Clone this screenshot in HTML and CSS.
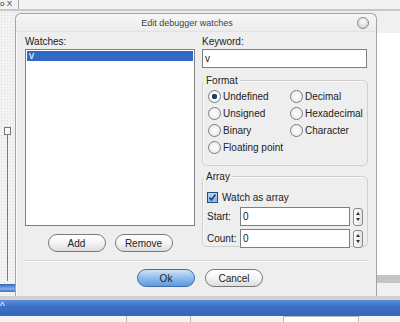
FILE: index.html
```html
<!DOCTYPE html>
<html lang="en">
<head>
    <meta charset="UTF-8">
    <title>Edit debugger watches</title>
    <link rel="stylesheet" href="styles.css">
</head>
<body>
    <div class="topbar">
        <span class="tab">o X</span>
    </div>

    <div class="middle">
        <div class="side-left">
            <div class="tree-box"></div>
            <div class="tree-line"></div>
            <div class="left-sel"></div>
        </div>

        <div class="dialog">
            <div class="title">
                <span>Edit debugger watches</span>
                <span class="close-btn"></span>
            </div>

            <div class="dialog-body">
                <div class="cols">
                    <div class="col-left">
                        <label class="lbl">Watches:</label>
                        <div class="listbox">
                            <div class="item selected">v</div>
                        </div>
                        <div class="btn-row">
                            <button class="btn">Add</button>
                            <button class="btn">Remove</button>
                        </div>
                    </div>

                    <div class="col-right">
                        <label class="lbl">Keyword:</label>
                        <div class="input keyword">v</div>

                        <fieldset class="group format">
                            <legend>Format</legend>
                            <div class="radios">
                                <span class="radio checked">Undefined</span>
                                <span class="radio">Decimal</span>
                                <span class="radio">Unsigned</span>
                                <span class="radio">Hexadecimal</span>
                                <span class="radio">Binary</span>
                                <span class="radio">Character</span>
                                <span class="radio wide">Floating point</span>
                            </div>
                        </fieldset>

                        <fieldset class="group array">
                            <legend>Array</legend>
                            <div class="check-row">
                                <span class="checkbox">
                                    <svg width="9" height="9" viewBox="0 0 9 9"><path d="M1.5 4.5 L3.5 7 L7.5 1.5" fill="none" stroke="#1d3f8a" stroke-width="1.6"/></svg>
                                </span>
                                Watch as array
                            </div>
                            <div class="spin-row">
                                <span class="spin-lbl">Start:</span>
                                <div class="input spin-input">0</div>
                                <span class="spinner"><i class="up"></i><i class="down"></i></span>
                            </div>
                            <div class="spin-row">
                                <span class="spin-lbl">Count:</span>
                                <div class="input spin-input">0</div>
                                <span class="spinner"><i class="up"></i><i class="down"></i></span>
                            </div>
                        </fieldset>
                    </div>
                </div>

                <div class="separator"></div>

                <div class="btn-row main-btns">
                    <button class="btn ok">Ok</button>
                    <button class="btn">Cancel</button>
                </div>
            </div>
        </div>

        <div class="side-right">
            <div class="pane"></div>
        </div>
    </div>

    <div class="bottom">
        <div class="bluebar"><span class="caret">^</span></div>
        <div class="status">
            <span class="cell c1"></span>
            <span class="cell c2"></span>
            <span class="cell c3"></span>
            <span class="cell c4"></span>
        </div>
    </div>
</body>
</html>
```

FILE: styles.css
```css
* {
    box-sizing: border-box;
}

body {
    margin: 0;
    width: 400px;
    height: 322px;
    overflow: hidden;
    background-color: #ececec;
    font-family: 'Liberation Sans', Arial, sans-serif;
    font-size: 10px;
    color: #222;
}

.topbar {
    height: 11px;
    background-color: #f2f2f2;
    border-bottom: 2px solid #c8c8c8;
    display: flex;
    align-items: flex-start;
}

.tab {
    width: 19px;
    height: 9px;
    line-height: 8px;
    font-size: 8px;
    border-right: 1px solid #a8a8a8;
    color: #333;
}

.middle {
    display: flex;
    height: 285px;
}

.side-left {
    width: 15px;
    display: flex;
    flex-direction: column;
    align-items: center;
    background-color: #f3f3f3;
    background-image: radial-gradient(#dcdcdc 0.6px, transparent 0.7px);
    background-size: 3px 3px;
}

.tree-box {
    margin-top: 116px;
    width: 7px;
    height: 8px;
    border: 1px solid #777;
    background-color: #f8f8f8;
}

.tree-line {
    width: 1px;
    height: 146px;
    background-color: #777;
}

.left-sel {
    align-self: stretch;
    height: 8px;
    margin-top: 3px;
    background: linear-gradient(#2d62bd, #86aee6 60%, #3a6fc9);
}

.dialog {
    width: 362px;
    margin-top: 2px;
    border: 1px solid #a4a4a4;
    border-bottom: none;
    border-radius: 6px 6px 0 0;
    background-color: #eeeeee;
    display: flex;
    flex-direction: column;
    box-shadow: inset 1px 0 0 #fafafa;
}

.title {
    height: 18px;
    display: flex;
    align-items: center;
    justify-content: center;
    position: relative;
    padding-right: 18px;
    font-size: 9px;
    color: #444;
    background: linear-gradient(#f6f6f6, #ececec);
    border-bottom: 1px solid #e2e2e2;
    border-radius: 6px 6px 0 0;
}

.close-btn {
    position: absolute;
    right: 7px;
    top: 3px;
    width: 12px;
    height: 12px;
    border-radius: 50%;
    border: 1px solid #8a8a8a;
    background: radial-gradient(circle at 50% 35%, #ffffff, #c9c9c9);
}

.dialog-body {
    padding: 4px 9px 0 9px;
    display: flex;
    flex-direction: column;
}

.cols {
    display: flex;
    gap: 7px;
}

.col-left {
    width: 171px;
    display: flex;
    flex-direction: column;
}

.col-right {
    width: 165px;
    display: flex;
    flex-direction: column;
}

.lbl {
    height: 13px;
    line-height: 12px;
    font-size: 10px;
}

.listbox {
    height: 177px;
    background-color: #fff;
    border: 1px solid #7f7f7f;
    padding: 1px;
}

.item {
    height: 10px;
    line-height: 10px;
    padding-left: 2px;
}

.item.selected {
    background-color: #316ac5;
    color: #fff;
}

.btn-row {
    display: flex;
    justify-content: center;
    gap: 9px;
    margin-top: 8px;
}

.btn {
    width: 58px;
    height: 18px;
    padding: 0;
    border: 1px solid #7a7a7a;
    border-radius: 9px;
    background: linear-gradient(#ffffff, #f4f4f4 50%, #dcdcdc);
    font-family: 'Liberation Sans', Arial, sans-serif;
    font-size: 10px;
    color: #222;
}

.btn.ok {
    border-color: #3e6ea6;
    background: linear-gradient(#cfe3f8, #8fbcec 50%, #5d9be0);
}

.input {
    height: 19px;
    background-color: #fff;
    border: 1px solid #7f7f7f;
    padding-left: 2px;
    line-height: 17px;
    font-size: 10px;
}

.group {
    margin: 0;
    padding: 4px 4px 6px 4px;
    border: 1px solid #cfcfcf;
    border-radius: 5px;
    box-shadow: inset 1px 1px 0 #fafafa;
}

.group legend {
    padding: 0 2px;
    margin-left: -3px;
    font-size: 10px;
}

.format {
    margin-top: 7px;
    height: 91px;
}

.radios {
    display: grid;
    grid-template-columns: 82px 1fr;
    row-gap: 6px;
    padding-top: 1px;
    padding-left: 1px;
}

.radio {
    display: flex;
    align-items: center;
    gap: 2px;
    height: 11px;
    font-size: 10px;
}

.radio::before {
    content: "";
    width: 11px;
    height: 11px;
    border-radius: 50%;
    border: 1px solid #7c7c7c;
    background: radial-gradient(#ffffff, #e4e4e4);
}

.radio.checked::before {
    background: radial-gradient(#1f3e6c 2.5px, #ffffff 3px, #e4e4e4);
}

.radio.wide {
    grid-column: span 2;
}

.array {
    margin-top: 5px;
    height: 76px;
}

.check-row {
    display: flex;
    align-items: center;
    gap: 4px;
    height: 12px;
    margin-top: 5px;
    font-size: 10px;
}

.checkbox {
    width: 11px;
    height: 11px;
    border: 1px solid #1c5180;
    background: linear-gradient(#bcd3ef, #8fb4e3);
    display: flex;
    align-items: center;
    justify-content: center;
}

.spin-row {
    display: flex;
    align-items: center;
    margin-top: 4px;
}

.spin-row + .spin-row {
    margin-top: 3px;
}

.spin-lbl {
    width: 33px;
    font-size: 10px;
}

.spin-input {
    width: 110px;
}

.spinner {
    margin-left: 3px;
    width: 10px;
    height: 18px;
    border: 1px solid #8a8a8a;
    border-radius: 3px;
    background: linear-gradient(90deg, #ffffff, #e2e2e2);
    display: flex;
    flex-direction: column;
    align-items: center;
    justify-content: center;
    gap: 3px;
}

.spinner i {
    width: 0;
    height: 0;
    border-left: 2px solid transparent;
    border-right: 2px solid transparent;
}

.spinner .up {
    border-bottom: 3px solid #333;
}

.spinner .down {
    border-top: 3px solid #333;
}

.separator {
    height: 2px;
    margin-top: 8px;
    border-top: 1px solid #d6d6d6;
    border-bottom: 1px solid #fafafa;
}

.main-btns {
    margin-top: 7px;
    gap: 10px;
    padding-left: 8px;
}

.side-right {
    flex: 1;
    display: flex;
    flex-direction: column;
    background-color: #f0f0f0;
}

.pane {
    margin-top: 22px;
    height: 250px;
    background-color: #ffffff;
    border-bottom: 8px solid #d2d2d2;
    border-image: linear-gradient(#ffffff, #c4c4c4) 1;
}

.bottom {
    border-top: 4px solid #d0d0d0;
}

.bluebar {
    height: 16px;
    background: linear-gradient(#5b8fd8, #3d70c4 40%, #3566b8);
    color: #fff;
    font-size: 10px;
    line-height: 14px;
    overflow: hidden;
}

.caret {
    margin-left: 0;
}

.status {
    height: 6px;
    display: flex;
    background-color: #f4f4f4;
}

.cell {
    height: 6px;
    border-right: 1px solid #b8b8b8;
}

.c1 { width: 127px; }
.c2 { width: 64px; }
.c3 { width: 92px; border-right: none; }
.c4 {
    width: 76px;
    background-color: #fff;
    border: 1px solid #b8b8b8;
    border-bottom: none;
}
```
